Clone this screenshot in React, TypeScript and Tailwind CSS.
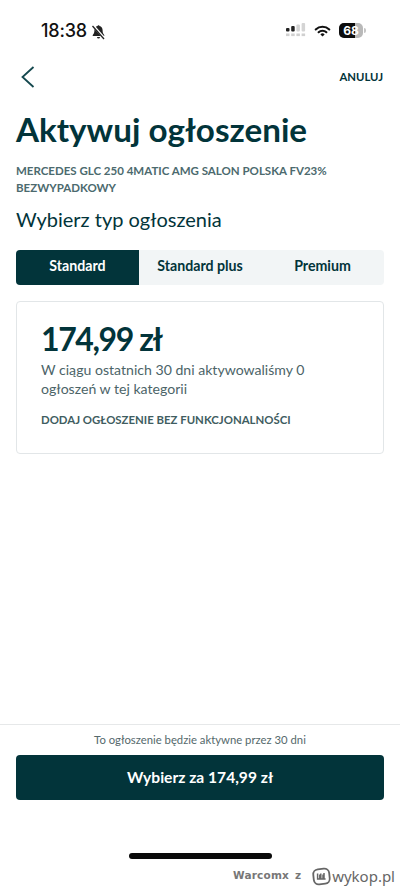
import React from "react";

const ink = "text-[#02343a]";

function StatusBar() {
  return (
    <div className="flex h-[60px] items-start justify-between pl-[41px] pr-[34px] pt-[20px]">
      <div className="flex items-center gap-[4px]">
        <span className="text-[18px] leading-[22px] font-medium text-[#111] font-['Inter',sans-serif] tracking-[-0.2px]">18:38</span>
        <svg width="15" height="16" viewBox="0 0 15 16" className="mt-[1px]">
          <path d="M7.5 1.2c.6 0 1 .4 1 .9 2 .5 3.1 2.1 3.1 4.2 0 2.6.7 3.6 1.6 4.6.3.4.1 1-.5 1H2.3c-.6 0-.8-.6-.5-1 .9-1 1.6-2 1.6-4.6 0-2.1 1.1-3.7 3.1-4.2 0-.5.4-.9 1-.9z" fill="#222" />
          <path d="M6 13h3a1.5 1.5 0 0 1-3 0z" fill="#222" />
          <path d="M2 1.5 13.5 14.5" stroke="#fff" strokeWidth="2.6" />
          <path d="M1.5 2 13 15" stroke="#222" strokeWidth="1.3" />
        </svg>
      </div>
      <div className="flex items-center pt-[3px]">
        <svg width="21" height="15" viewBox="0 0 21 15">
          <rect x="0" y="5" width="3.5" height="3.5" rx="1" fill="#222" />
          <rect x="5.2" y="3" width="3.5" height="5.5" rx="1" fill="#222" />
          <rect x="10.4" y="1.4" width="3.5" height="7.1" rx="1" fill="#d4d4d4" />
          <rect x="15.6" y="0" width="3.5" height="8.5" rx="1" fill="#d4d4d4" />
          <rect x="0" y="10.5" width="3.5" height="2.6" fill="#d0d0d0" />
          <rect x="5.2" y="10.5" width="3.5" height="2.6" fill="#d0d0d0" />
          <rect x="10.4" y="10.5" width="3.5" height="2.6" fill="#d0d0d0" />
          <rect x="15.6" y="10.5" width="3.5" height="2.6" fill="#d0d0d0" />
        </svg>
        <svg width="17" height="12" viewBox="0 0 20 14" className="ml-[7px]">
          <path d="M2 5.2a11.4 11.4 0 0 1 16 0" fill="none" stroke="#111" strokeWidth="2.4" strokeLinecap="round" />
          <path d="M5.4 8.5a6.6 6.6 0 0 1 9.2 0" fill="none" stroke="#111" strokeWidth="2.4" strokeLinecap="round" />
          <path d="M7.5 11 10 13.6 12.5 11a3.6 3.6 0 0 0-5 0z" fill="#111" />
        </svg>
        <div className="ml-[8px] flex items-center">
          <div className="relative flex h-[15px] w-[24px] items-center justify-center overflow-hidden rounded-[5px] bg-[#b9b9b9]">
            <div className="absolute inset-y-0 left-0 w-[16px] bg-[#0c0c0c]" />
            <span className="relative text-[12px] font-bold leading-none text-white font-['Inter',sans-serif]">68</span>
          </div>
          <div className="ml-[1px] h-[5px] w-[2px] rounded-r-[2px] bg-[#c4c4c4]" />
        </div>
      </div>
    </div>
  );
}

function Tab({ label, active, width }: { label: string; active?: boolean; width: string }) {
  return (
    <div
      className={`flex items-center justify-center pb-[3px] text-[14.2px] font-bold ${width} ${
        active ? "rounded-l-[4px] bg-[#02343a] text-white" : ink
      }`}
    >
      {label}
    </div>
  );
}

function WykopLogo() {
  return (
    <svg width="19" height="19" viewBox="0 0 19 19">
      <rect x="1.5" y="2" width="16" height="15" rx="5" fill="none" stroke="#666" strokeWidth="1.8" transform="rotate(-6 9.5 9.5)" />
      <path d="M5.6 6.5v5.5h2.2V7.5M8.8 6.5v5.5H11V7.5M12 6v6h1.6" fill="none" stroke="#666" strokeWidth="1.5" />
    </svg>
  );
}

export default function App() {
  return (
    <div className={`flex h-[887px] w-[400px] flex-col bg-white font-['Lato',sans-serif] ${ink}`}>
      <StatusBar />

      <div className="flex h-[34px] items-center justify-between pl-[21px] pr-[17px]">
        <svg width="14" height="24" viewBox="0 0 14 24">
          <path d="M12.5 2 1.5 12 12.5 22" fill="none" stroke="#14484e" strokeWidth="1.8" />
        </svg>
        <span className="text-[11.3px] font-bold">ANULUJ</span>
      </div>

      <h1 className="mt-[13px] px-4 text-[33.2px] font-bold leading-[44px]">Aktywuj ogłoszenie</h1>

      <p className="mt-[11px] w-[345px] pl-4 text-[11.5px] font-bold leading-[17px] text-[#4c6a6e]">
        MERCEDES GLC 250 4MATIC AMG SALON POLSKA FV23% BEZWYPADKOWY
      </p>

      <h2 className="mt-[7px] px-4 text-[20px] leading-[32px]">Wybierz typ ogłoszenia</h2>

      <div className="mx-4 mt-[15px] flex h-[35px] rounded-[4px] bg-[#f2f5f6]">
        <Tab label="Standard" active width="w-[123px]" />
        <Tab label="Standard plus" width="w-[122px]" />
        <Tab label="Premium" width="w-[123px]" />
      </div>

      <div className="mx-4 mt-[16px] h-[153px] rounded-[4px] border border-[#e2e6e8] px-[24px] pt-[17px]">
        <div className="text-[32px] font-bold leading-[40px] tracking-[-1.4px]">174,99 zł</div>
        <p className="mt-[1px] text-[14.1px] leading-[19px] text-[#4c6468]">
          W ciągu ostatnich 30 dni aktywowaliśmy 0
          <br />
          ogłoszeń w tej kategorii
        </p>
        <div className="mt-[14px] text-[11.4px] font-bold leading-[16px] text-[#3f5d61]">
          DODAJ OGŁOSZENIE BEZ FUNKCJONALNOŚCI
        </div>
      </div>

      <div className="mt-auto border-t border-[#e6e8e9] pt-[6px]">
        <p className="text-center text-[11.3px] leading-[18px] text-[#55696c]">To ogłoszenie będzie aktywne przez 30 dni</p>
        <div className="mx-4 mt-[6px] flex h-[45px] items-center justify-center rounded-[4px] bg-[#02343a] text-[15.6px] font-bold text-white">
          Wybierz za 174,99 zł
        </div>
        <div className="mt-[53px] flex justify-center">
          <div className="h-[6px] w-[143px] rounded-full bg-[#0a0a0a]" />
        </div>
        <div className="mt-[6px] flex h-[22px] items-center justify-end pr-[5px] text-[#777]">
          <span className="font-['DejaVu_Sans',sans-serif] text-[10.5px] font-bold tracking-[0.2px]">Warcomx</span>
          <span className="ml-[6px] font-['DejaVu_Sans',sans-serif] text-[10.5px] font-bold">z</span>
          <div className="ml-[11px] flex items-center gap-[1px]">
            <WykopLogo />
            <span className="font-['Noto_Sans',sans-serif] text-[15px] leading-none text-[#666]">wykop.pl</span>
          </div>
        </div>
      </div>
    </div>
  );
}
